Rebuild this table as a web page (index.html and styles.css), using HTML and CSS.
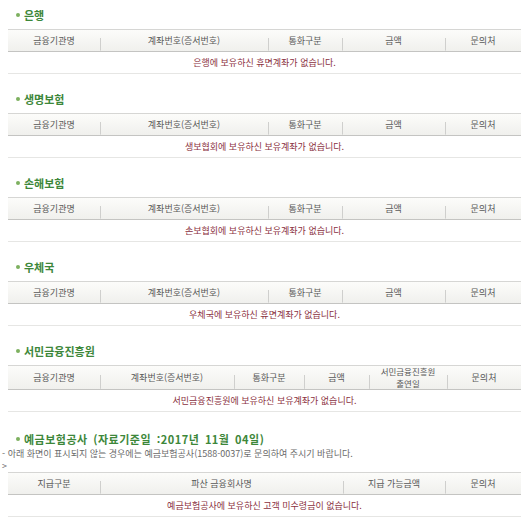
FILE: index.html
```html
<!DOCTYPE html>
<html lang="ko">
<head>
<meta charset="utf-8">
<title>휴면계좌 조회</title>
<link rel="stylesheet" href="styles.css">
</head>
<body>
<div class="page">
  <section class="sec">
    <h3 class="title">은행</h3>
    <div class="tbl cols-a">
      <div class="th">금융기관명</div>
      <div class="th sep">계좌번호(증서번호)</div>
      <div class="th sep">통화구분</div>
      <div class="th sep">금액</div>
      <div class="th sep">문의처</div>
      <div class="msg">은행에 보유하신 휴면계좌가 없습니다.</div>
    </div>
  </section>
  <section class="sec">
    <h3 class="title">생명보험</h3>
    <div class="tbl cols-a">
      <div class="th">금융기관명</div>
      <div class="th sep">계좌번호(증서번호)</div>
      <div class="th sep">통화구분</div>
      <div class="th sep">금액</div>
      <div class="th sep">문의처</div>
      <div class="msg">생보협회에 보유하신 보유계좌가 없습니다.</div>
    </div>
  </section>
  <section class="sec">
    <h3 class="title">손해보험</h3>
    <div class="tbl cols-a">
      <div class="th">금융기관명</div>
      <div class="th sep">계좌번호(증서번호)</div>
      <div class="th sep">통화구분</div>
      <div class="th sep">금액</div>
      <div class="th sep">문의처</div>
      <div class="msg">손보협회에 보유하신 보유계좌가 없습니다.</div>
    </div>
  </section>
  <section class="sec">
    <h3 class="title">우체국</h3>
    <div class="tbl cols-a">
      <div class="th">금융기관명</div>
      <div class="th sep">계좌번호(증서번호)</div>
      <div class="th sep">통화구분</div>
      <div class="th sep">금액</div>
      <div class="th sep">문의처</div>
      <div class="msg">우체국에 보유하신 휴면계좌가 없습니다.</div>
    </div>
  </section>
  <section class="sec">
    <h3 class="title">서민금융진흥원</h3>
    <div class="tbl cols-b">
      <div class="th tall">금융기관명</div>
      <div class="th tall sep">계좌번호(증서번호)</div>
      <div class="th tall sep">통화구분</div>
      <div class="th tall sep">금액</div>
      <div class="th tall sep two-line">서민금융진흥원<br>출연일</div>
      <div class="th tall sep">문의처</div>
      <div class="msg">서민금융진흥원에 보유하신 보유계좌가 없습니다.</div>
    </div>
  </section>
  <section class="sec sec-last">
    <h3 class="title title-wide">예금보험공사 (자료기준일 :2017년 11월 04일)</h3>
    <p class="note">- 아래 화면이 표시되지 않는 경우에는 예금보험공사(1588-0037)로 문의하여 주시기 바랍니다.<br>&gt;</p>
    <div class="tbl cols-c">
      <div class="th">지급구분</div>
      <div class="th sep">파산 금융회사명</div>
      <div class="th sep">지급 가능금액</div>
      <div class="th sep">문의처</div>
      <div class="msg">예금보험공사에 보유하신 고객 미수령금이 없습니다.</div>
    </div>
  </section>
</div>
</body>
</html>
```

FILE: styles.css
```css
html, body {
  margin: 0;
  padding: 0;
  background: #ffffff;
}

body {
  font-family: "Noto Sans CJK KR", "Noto Sans", sans-serif;
  color: #555555;
}

.page {
  width: 513px;
  padding: 7px 10px 0 8px;
}

.sec + .sec {
  margin-top: 17px;
}

.sec-last.sec {
  margin-top: 19px;
}

.title {
  display: flex;
  align-items: center;
  gap: 4px;
  height: 16px;
  margin: 0 0 6px 8px;
  font-size: 11px;
  font-weight: bold;
  color: #3d873a;
  white-space: nowrap;
}

.title::before {
  content: "";
  width: 4px;
  height: 4px;
  border-radius: 50%;
  background: #7db05f;
  flex: none;
}

.title-wide {
  margin-bottom: 1px;
  letter-spacing: 0.5px;
  word-spacing: 2px;
}

.note {
  margin: 0 0 0 -6px;
  font-size: 9px;
  line-height: 12px;
  color: #6a6a6a;
  white-space: nowrap;
}

.tbl {
  display: grid;
  border-top: 1px solid #d6d6d4;
}

.cols-a {
  grid-template-columns: 92px 168px 74px 103px 76px;
}

.cols-b {
  grid-template-columns: 92px 134px 70px 65px 78px 74px;
}

.cols-c {
  grid-template-columns: 92px 243px 102px 76px;
}

.th {
  height: 21px;
  display: flex;
  align-items: center;
  justify-content: center;
  text-align: center;
  font-size: 9px;
  line-height: 11px;
  color: #585858;
  background: linear-gradient(#fcfcfa, #f0f0ed);
  border-bottom: 1px solid #c4c4c2;
}

.th.tall {
  height: 23px;
}

.th.two-line {
  font-size: 8.5px;
  line-height: 11.5px;
}

.th.sep {
  background:
    linear-gradient(#cfcfcd, #cfcfcd) left bottom / 1px 60% no-repeat,
    linear-gradient(#fcfcfa, #f0f0ed);
}

.msg {
  grid-column: 1 / -1;
  height: 21px;
  display: flex;
  align-items: center;
  justify-content: center;
  font-size: 9px;
  color: #8a3040;
  border-bottom: 1px solid #e6e6e4;
}
```
